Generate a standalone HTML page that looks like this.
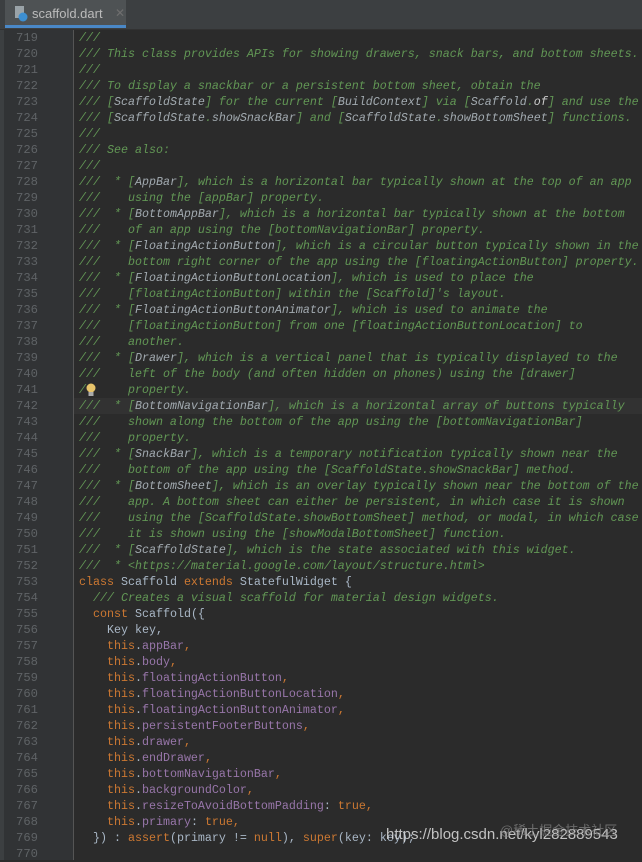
<!DOCTYPE html><html><head><style>
body{margin:0;width:642px;height:860px;background:#2b2b2b;overflow:hidden;position:relative;font-family:"Liberation Mono",monospace;}
#tabs{position:absolute;left:0;top:0;width:642px;height:30px;background:#3c3f41;border-bottom:1px solid #323232;box-sizing:border-box}
#tab{position:absolute;left:5px;top:0;width:121px;height:28px;background:#4e5254;}
#tab .u{position:absolute;left:0;bottom:0;width:121px;height:3px;background:#4a88c7}
#tab .t{position:absolute;left:27px;top:6px;font:13px "Liberation Sans",sans-serif;color:#bbbbbb}
#tab .x{position:absolute;left:110px;top:6px;font:12px "Liberation Sans",sans-serif;color:#6e6e6e}
#strip{position:absolute;left:0;top:30px;width:4px;height:830px;background:#3c3f41}
#gut{position:absolute;left:4px;top:30px;width:69px;height:830px;background:#313335;border-right:1px solid #555}
.ln{position:absolute;left:2px;width:36px;text-align:right;font-size:12.2px;color:#5f6366;height:16px;line-height:16px}
.cl{position:absolute;left:79px;white-space:pre;font-size:11.67px;height:16px;line-height:16px;color:#a9b7c6}
.c{color:#629755;font-style:italic}.r{color:#a2aab0;font-style:italic}
.k{color:#cc7832}.f{color:#9876aa}
#hl{position:absolute;left:74px;top:398px;width:568px;height:16px;background:#323232}
</style></head><body>
<div id="tabs"><div id="tab"><svg style="position:absolute;left:9px;top:6px" width="14" height="16"><rect x="1" y="0" width="9" height="12" fill="#9aa3a8"/><circle cx="9" cy="11" r="4.5" fill="#3d8fd1"/></svg><span class="t">scaffold.dart</span><span class="x">✕</span><div class="u"></div></div></div>
<div id="strip"></div><div id="gut"></div><div id="hl"></div>
<div id="code"></div>
<script>
const L=[
'<span class="c">///</span>',
'<span class="c">/// This class provides APIs for showing drawers, snack bars, and bottom sheets.</span>',
'<span class="c">///</span>',
'<span class="c">/// To display a snackbar or a persistent bottom sheet, obtain the</span>',
'<span class="c">/// [<span class="r">ScaffoldState</span>] for the current [<span class="r">BuildContext</span>] via [<span class="r">Scaffold</span>.<span class="r" style="color:#ccc">of</span>] and use the</span>',
'<span class="c">/// [<span class="r">ScaffoldState</span>.<span class="r">showSnackBar</span>] and [<span class="r">ScaffoldState</span>.<span class="r">showBottomSheet</span>] functions.</span>',
'<span class="c">///</span>',
'<span class="c">/// See also:</span>',
'<span class="c">///</span>',
'<span class="c">///  * [<span class="r">AppBar</span>], which is a horizontal bar typically shown at the top of an app</span>',
'<span class="c">///    using the [appBar] property.</span>',
'<span class="c">///  * [<span class="r">BottomAppBar</span>], which is a horizontal bar typically shown at the bottom</span>',
'<span class="c">///    of an app using the [bottomNavigationBar] property.</span>',
'<span class="c">///  * [<span class="r">FloatingActionButton</span>], which is a circular button typically shown in the</span>',
'<span class="c">///    bottom right corner of the app using the [floatingActionButton] property.</span>',
'<span class="c">///  * [<span class="r">FloatingActionButtonLocation</span>], which is used to place the</span>',
'<span class="c">///    [floatingActionButton] within the [Scaffold]\'s layout.</span>',
'<span class="c">///  * [<span class="r">FloatingActionButtonAnimator</span>], which is used to animate the</span>',
'<span class="c">///    [floatingActionButton] from one [floatingActionButtonLocation] to</span>',
'<span class="c">///    another.</span>',
'<span class="c">///  * [<span class="r">Drawer</span>], which is a vertical panel that is typically displayed to the</span>',
'<span class="c">///    left of the body (and often hidden on phones) using the [drawer]</span>',
'<span class="c">/      property.</span>',
'<span class="c">///  * [<span class="r">BottomNavigationBar</span>], which is a horizontal array of buttons typically</span>',
'<span class="c">///    shown along the bottom of the app using the [bottomNavigationBar]</span>',
'<span class="c">///    property.</span>',
'<span class="c">///  * [<span class="r">SnackBar</span>], which is a temporary notification typically shown near the</span>',
'<span class="c">///    bottom of the app using the [ScaffoldState.showSnackBar] method.</span>',
'<span class="c">///  * [<span class="r">BottomSheet</span>], which is an overlay typically shown near the bottom of the</span>',
'<span class="c">///    app. A bottom sheet can either be persistent, in which case it is shown</span>',
'<span class="c">///    using the [ScaffoldState.showBottomSheet] method, or modal, in which case</span>',
'<span class="c">///    it is shown using the [showModalBottomSheet] function.</span>',
'<span class="c">///  * [<span class="r">ScaffoldState</span>], which is the state associated with this widget.</span>',
'<span class="c">///  * &lt;https://material.google.com/layout/structure.html&gt;</span>',
'<span class="k">class</span> Scaffold <span class="k">extends</span> StatefulWidget {',
'  <span class="c">/// Creates a visual scaffold for material design widgets.</span>',
'  <span class="k">const</span> Scaffold({',
'    Key key,',
'    <span class="k">this</span>.<span class="f">appBar</span><span class="k">,</span>',
'    <span class="k">this</span>.<span class="f">body</span><span class="k">,</span>',
'    <span class="k">this</span>.<span class="f">floatingActionButton</span><span class="k">,</span>',
'    <span class="k">this</span>.<span class="f">floatingActionButtonLocation</span><span class="k">,</span>',
'    <span class="k">this</span>.<span class="f">floatingActionButtonAnimator</span><span class="k">,</span>',
'    <span class="k">this</span>.<span class="f">persistentFooterButtons</span><span class="k">,</span>',
'    <span class="k">this</span>.<span class="f">drawer</span><span class="k">,</span>',
'    <span class="k">this</span>.<span class="f">endDrawer</span><span class="k">,</span>',
'    <span class="k">this</span>.<span class="f">bottomNavigationBar</span><span class="k">,</span>',
'    <span class="k">this</span>.<span class="f">backgroundColor</span><span class="k">,</span>',
'    <span class="k">this</span>.<span class="f">resizeToAvoidBottomPadding</span>: <span class="k">true,</span>',
'    <span class="k">this</span>.<span class="f">primary</span>: <span class="k">true</span><span class="k">,</span>',
'  }) : <span class="k">assert</span>(primary != <span class="k">null</span>), <span class="k">super</span>(key: key);',
''];
let h='';
L.forEach((s,i)=>{const y=30+i*16;h+='<div class="ln" style="top:'+y+'px">'+(719+i)+'</div><div class="cl" style="top:'+y+'px">'+s+'</div>';});
document.getElementById('code').innerHTML=h;
</script>
<svg style="position:absolute;left:85px;top:382px" width="12" height="16"><circle cx="6" cy="6" r="4.5" fill="#e8c46a"/><rect x="3.5" y="10" width="5" height="4" fill="#aaa"/></svg>
<div style="position:absolute;left:386px;top:826px;font:15px 'Liberation Sans',sans-serif;color:#ddd;opacity:.85">https://blog.csdn.net/kyl282889543</div>
<div style="position:absolute;left:500px;top:820px;font:13px 'Liberation Sans','Noto Sans CJK SC',sans-serif;color:#888;opacity:.7">@稀土掘金技术社区</div>
</body></html>
